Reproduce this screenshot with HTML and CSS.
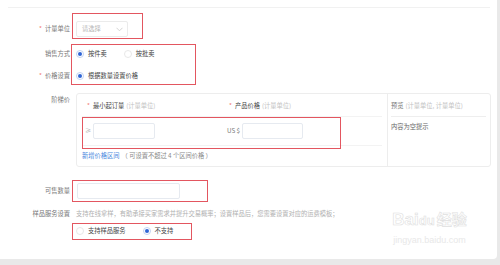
FILE: index.html
```html
<!DOCTYPE html>
<html lang="zh-CN">
<head>
<meta charset="utf-8">
<link rel="stylesheet" href="styles.css">
</head>
<body>
<div class="card">
  <div class="topline"></div>
  <div class="form">
    <div class="row r1">
      <div class="label"><span class="req">*</span>计量单位</div>
      <div class="select"><span>请选择</span>
        <svg class="chev" width="7" height="5" viewBox="0 0 7 5"><polyline points="0.5,0.8 3.5,3.8 6.5,0.8" fill="none" stroke="#cfcfcf" stroke-width="0.9"/></svg>
      </div>
    </div>
    <div class="row r2">
      <div class="label">销售方式</div>
      <div class="radios">
        <span class="radio"><span class="dot on"></span>按件卖</span>
        <span class="radio"><span class="dot"></span>按批卖</span>
      </div>
    </div>
    <div class="row r3">
      <div class="label"><span class="req">*</span>价格设置</div>
      <div class="radios">
        <span class="radio"><span class="dot on"></span>根据数量设置价格</span>
      </div>
    </div>
    <div class="row r4">
      <div class="label">阶梯价</div>
      <div class="ladder">
        <div class="ladder-main">
          <div class="lrow lhead">
            <div class="c1"><span class="req">*</span>最小起订量 <span class="unit">(计量单位)</span></div>
            <div class="c2"><span class="req">*</span>产品价格 <span class="unit">(计量单位)</span></div>
          </div>
          <div class="lrow lbody">
            <div class="c1"><span class="ge">≥</span><span class="input in1"></span></div>
            <div class="c2"><span class="cur">US $</span><span class="input in2"></span></div>
          </div>
          <div class="addline"><span class="link">新增价格区间</span><span class="hint">（ 可设置不超过 4 个区间价格 ）</span></div>
        </div>
        <div class="ladder-preview">
          <div class="phead">预览 <span class="unit">(计量单位, 计量单位)</span></div>
          <div class="pbody">内容为空提示</div>
        </div>
      </div>
    </div>
    <div class="row r5">
      <div class="label">可售数量</div>
      <span class="input in3"></span>
    </div>
    <div class="row r6">
      <div class="label">样品服务设置</div>
      <div class="desc">支持在线拿样，有助承接买家需求并提升交易概率；设置样品后，您需要设置对应的运费模板；</div>
    </div>
    <div class="row r7">
      <div class="label"></div>
      <div class="radios">
        <span class="radio"><span class="dot"></span>支持样品服务</span>
        <span class="radio"><span class="dot on"></span>不支持</span>
      </div>
    </div>
  </div>

  <div class="mark m1"></div>
  <div class="mark m2"></div>
  <div class="mark m3"></div>
  <div class="mark m4"></div>
  <div class="mark m5"></div>

  <div class="watermark">
    <div class="wm-logo">Bai<span class="wm-du">du</span><span class="wm-cn">经验</span></div>
    <div class="wm-url">jingyan.baidu.com</div>
  </div>
</div>
</body>
</html>
```

FILE: styles.css
```css
* { box-sizing: border-box; }
html, body {
  margin: 0;
  padding: 0;
  background: #e9e9e9;
}
body {
  width: 500px;
  height: 265px;
  overflow: hidden;
  font-family: "Noto Sans CJK SC", "Noto Sans", "Liberation Sans", sans-serif;
  font-size: 6.25px;
  line-height: 14px;
  color: #444;
}
.card {
  position: relative;
  width: 497px;
  height: 259px;
  background: #fff;
  border-radius: 0 0 4px 0;
  padding-top: 7px;
}
.topline {
  margin-left: 8px;
  width: 482px;
  height: 1px;
  background: #f1f1f1;
}
.form {
  display: flex;
  flex-direction: column;
}
.row {
  display: flex;
  align-items: center;
}
.label {
  width: 76px;
  flex: none;
  padding-right: 6px;
  text-align: right;
  color: #777;
}
.req {
  color: #f27a72;
  margin-right: 3px;
}
.r1 { margin-top: 12px; height: 18px; }
.r2 { margin-top: 8px; height: 16px; }
.r3 { margin-top: 6px; height: 16px; }
.r4 { margin-top: 9px; align-items: flex-start; }
.r5 { margin-top: 15px; height: 18px; }
.r6 { margin-top: 7px; height: 14px; }
.r7 { margin-top: 3px; height: 14px; }

.select {
  width: 52px;
  height: 16px;
  border: 1px solid #ebebeb;
  border-radius: 2px;
  display: flex;
  align-items: center;
  justify-content: space-between;
  padding: 0 4px 0 5px;
  color: #b5b5b5;
}
.chev { display: block; }

.radios {
  display: flex;
  align-items: center;
}
.radio {
  display: flex;
  align-items: center;
  margin-right: 17px;
  color: #444;
}
.dot {
  position: relative;
  width: 8px;
  height: 8px;
  border-radius: 50%;
  border: 1px solid #e8e8e8;
  margin-right: 4px;
  flex: none;
  background: #fff;
}
.dot.on {
  border-color: #c3d4f3;
}
.dot.on::after {
  content: "";
  position: absolute;
  left: 1px;
  top: 1px;
  width: 4px;
  height: 4px;
  border-radius: 50%;
  background: #2f66d6;
}

.ladder {
  width: 415px;
  height: 74px;
  border: 1px solid #ededed;
  border-radius: 3px;
  display: flex;
}
.ladder-main {
  width: 311px;
  border-right: 1px solid #ededed;
  padding: 0 5px 0 5px;
}
.lrow {
  display: flex;
}
.lhead {
  height: 23px;
  align-items: center;
  border-bottom: 1px solid #f3f3f3;
}
.lbody {
  height: 29px;
  align-items: center;
  border-bottom: 1px solid #f3f3f3;
}
.c1 {
  width: 145px;
  display: flex;
  align-items: center;
}
.lhead .c1 { padding-left: 5px; padding-top: 2px; }
.lhead .c2 { padding-left: 2px; padding-top: 2px; }
.lbody .c1 { padding-left: 3px; }
.c2 {
  display: flex;
  align-items: center;
}
.lhead { color: #444; }
.unit { color: #c2c2c2; margin-left: 2px; }
.ge { color: #aaa; margin-right: 2px; }
.cur { color: #777; margin-right: 2px; }
.input {
  display: block;
  height: 16px;
  border: 1px solid #e6eaf0;
  border-radius: 2px;
  background: #fff;
}
.in1 { width: 62px; }
.in2 { width: 61px; }
.in3 { width: 103px; margin-left: 1px; }
.addline {
  height: 18px;
  display: flex;
  align-items: center;
  padding-top: 2px;
}
.link { color: #4a88dd; }
.hint { color: #888; margin-left: 2px; }

.ladder-preview {
  flex: 1;
  padding: 0 4px 0 3px;
}
.phead {
  height: 23px;
  display: flex;
  align-items: center;
  padding-top: 1px;
  border-bottom: 1px solid #eeeeee;
  color: #777;
}
.pbody {
  margin-top: 3px;
  color: #666;
}
.desc { color: #b0b0b0; }

.mark {
  position: absolute;
  border: 1.6px solid #e35660;
}
.m1 { left: 72px; top: 13px; width: 71px; height: 26px; }
.m2 { left: 71px; top: 44px; width: 125px; height: 41px; }
.m3 { left: 82px; top: 117px; width: 259px; height: 32px; }
.m4 { left: 72px; top: 180px; width: 136px; height: 22px; }
.m5 { left: 72px; top: 223px; width: 120px; height: 17px; }

.watermark {
  position: absolute;
  left: 382px;
  top: 206px;
  width: 95px;
  text-align: center;
  font-family: "Liberation Sans", sans-serif;
}
.wm-logo {
  font-size: 17px;
  line-height: 26px;
  font-weight: bold;
  color: #fff;
  -webkit-text-stroke: 0.6px #e0e0e0;
  white-space: nowrap;
}
.wm-du { font-size: 13px; }
.wm-cn {
  font-family: "Noto Sans CJK SC", sans-serif;
  font-size: 15px;
  margin-left: 2px;
}
.wm-url {
  font-size: 9px;
  line-height: 12px;
  color: #e8e8e8;
}
```
